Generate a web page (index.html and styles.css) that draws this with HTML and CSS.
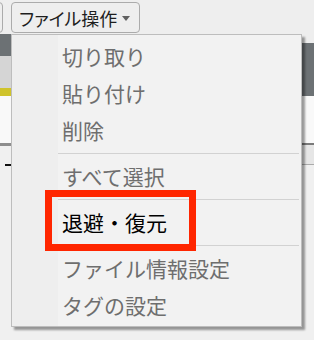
FILE: index.html
```html
<!DOCTYPE html>
<html lang="ja">
  <head>
    <meta charset="UTF-8">
    <title>ファイル操作メニュー</title>
    <link rel="stylesheet" href="styles.css">
  </head>
  <body>
    <div class="screen">
      <div class="toolbar">
        <button class="tb-btn tb-prev"></button>
        <button class="tb-btn tb-file">ファイル操作<span class="caret"></span></button>
      </div>

      <div class="workspace">
        <div class="pane pane-left">
          <div class="band band-dark"></div>
          <div class="band band-head"></div>
          <div class="band band-yellow"></div>
          <div class="band band-white"></div>
          <div class="band band-rule"></div>
          <div class="band band-rest"><span class="dash"></span></div>
        </div>
        <div class="pane pane-right">
          <div class="band band-gap"></div>
          <div class="band band-dark-tall"></div>
          <div class="band band-white"></div>
          <div class="band band-rule-thin"></div>
          <div class="band band-sub"></div>
          <div class="band band-rest"></div>
        </div>
      </div>

      <ul class="menu">
        <li class="menu-item">切り取り</li>
        <li class="menu-item">貼り付け</li>
        <li class="menu-item">削除</li>
        <li class="menu-sep"></li>
        <li class="menu-item">すべて選択</li>
        <li class="menu-sep"></li>
        <li class="menu-item is-active">退避・復元</li>
        <li class="menu-sep"></li>
        <li class="menu-item">ファイル情報設定</li>
        <li class="menu-item">タグの設定</li>
      </ul>

      <div class="callout"></div>
    </div>
  </body>
</html>
```

FILE: styles.css
```css
body {
  margin: 0;
  background: #f0f0f0;
  font-family: "Noto Sans CJK JP", "Noto Sans", sans-serif;
}
.screen {
  position: relative;
  width: 314px;
  height: 340px;
  overflow: hidden;
}

/* toolbar */
.toolbar {
  height: 34px;
  background: #eeeeee;
  display: flex;
  align-items: flex-start;
  gap: 8px;
}
.tb-btn {
  margin-top: 2px;
  height: 31px;
  border: 1px solid #ababab;
  border-radius: 4px;
  background: #eeeeee;
  font-family: inherit;
  color: #1e1e1e;
  padding: 0;
}
.tb-prev {
  width: 20px;
  margin-left: -17px;
}
.tb-file {
  width: 129px;
  display: flex;
  align-items: center;
  padding-left: 7px;
  font-size: 18px;
  font-feature-settings: "palt";
  line-height: 1;
}
.caret {
  margin-left: 5px;
  width: 0;
  height: 0;
  border-left: 4px solid transparent;
  border-right: 4px solid transparent;
  border-top: 5px solid #606060;
  margin-top: 1px;
}

/* what sits behind the menu */
.workspace {
  display: flex;
  height: 306px;
}
.pane {
  display: flex;
  flex-direction: column;
}
.pane-left {
  width: 160px;
}
.pane-right {
  flex: 1;
}
.band-dark {
  height: 22px;
  background: #6c7174;
}
.band-head {
  height: 32px;
  background: #d5d5d5;
}
.band-yellow {
  height: 8px;
  background: #cfc32b;
}
.band-white {
  height: 47px;
  background: #f9f9f9;
}
.band-rule {
  height: 3px;
  background: #8d8d8d;
}
.band-rest {
  flex: 1;
  background: #f0f0f0;
  padding: 18px 0 0 5px;
}
.dash {
  display: block;
  width: 6px;
  height: 2px;
  background: #111;
}
.band-gap {
  height: 9px;
  background: #eeeeee;
}
.band-dark-tall {
  height: 53px;
  background: #6c7174;
}
.band-rule-thin {
  height: 2px;
  background: #7a7a7a;
}
.band-sub {
  height: 19px;
  background: #e6e6e6;
  border-bottom: 1px solid #ababab;
}

/* dropdown */
.menu {
  position: absolute;
  left: 11px;
  top: 34px;
  width: 289px;
  margin: 0;
  padding: 3px 0 2px;
  list-style: none;
  border: 1px solid #bdbdbd;
  background: linear-gradient(to right, #eeeeee 46px, #f2f2f2 46px);
  box-shadow: 3px 3px 2px rgba(0, 0, 0, 0.38);
}
.menu-item {
  height: 37px;
  line-height: 37px;
  padding-left: 50px;
  font-size: 21px;
  color: #6e6e6e;
  white-space: nowrap;
}
.menu-item.is-active {
  color: #000;
}
.menu-sep {
  height: 1px;
  margin: 4px 2px 4px 46px;
  background: #d2d2d2;
}

/* annotation */
.callout {
  position: absolute;
  left: 45px;
  top: 190px;
  width: 137px;
  height: 47px;
  border: 7px solid #ff2600;
}
```
